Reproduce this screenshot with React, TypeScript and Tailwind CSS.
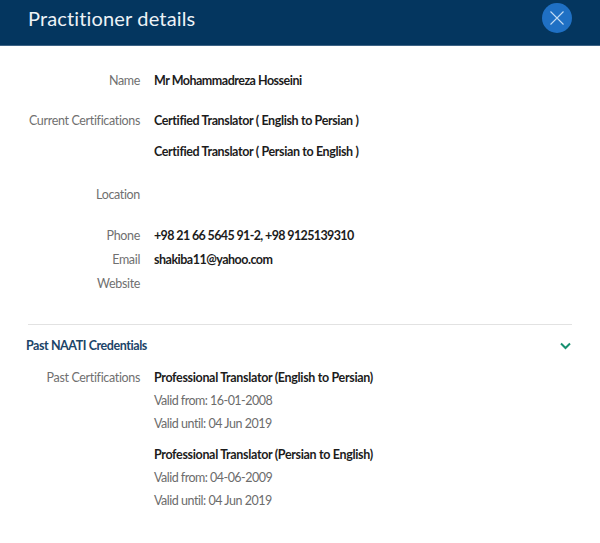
import type { ReactNode } from "react";

type RowProps = {
  label: string;
  className?: string;
  children?: ReactNode;
};

function Row({ label, className = "", children }: RowProps) {
  return (
    <div className={`flex ${className}`}>
      <dt className="w-[140px] shrink-0 text-right tracking-[-0.34px] text-[#707070]">{label}</dt>
      <dd className="ml-[14px] whitespace-nowrap font-bold text-[#1c1c1c]">{children}</dd>
    </div>
  );
}

function Credential({ title, from, until }: { title: string; from: string; until: string }) {
  return (
    <div className="mb-2">
      <p className="tracking-[-0.34px]">{title}</p>
      <p className="font-normal tracking-[-0.52px] text-[#6c6c6c]">Valid from: {from}</p>
      <p className="font-normal tracking-[-0.47px] text-[#6c6c6c]">Valid until: {until}</p>
    </div>
  );
}

export default function App() {
  return (
    <div className="h-[543px] w-[600px] overflow-hidden bg-white font-['Lato','Liberation_Sans',sans-serif] text-[12.5px] leading-6 [font-variant-ligatures:common-ligatures]">
      <header className="flex h-[46px] items-start justify-between border-b border-[#3d6385] bg-[#04365f] px-7">
        <h1 className="pt-[5px] text-[20px] leading-[26px] tracking-[0.15px] text-[#edf2f6]">Practitioner details</h1>
        <button aria-label="Close" className="mt-[3px] flex h-[30px] w-[30px] items-center justify-center rounded-full bg-[#1f70c4]">
          <svg width="14" height="14" viewBox="0 0 14 14" stroke="#c3dcf3" strokeWidth="1.1">
            <path d="M.5 .5l13 13M13.5 .5l-13 13" />
          </svg>
        </button>
      </header>

      <dl className="pt-[23px]">
        <Row label="Name">
          <span className="tracking-[-0.5px]">Mr Mohammadreza Hosseini</span>
        </Row>
        <Row label="Current Certifications" className="mt-4">
          <p className="tracking-[-0.38px]">Certified Translator ( English to Persian )</p>
          <p className="mt-[7px] tracking-[-0.38px]">Certified Translator ( Persian to English )</p>
        </Row>
        <Row label="Location" className="mt-[19px]" />
        <Row label="Phone" className="mt-[17px]">
          <span className="tracking-[-0.63px]">+98 21 66 5645 91-2, +98 9125139310</span>
        </Row>
        <Row label="Email">
          <span className="tracking-[-0.5px]">shakiba11@yahoo.com</span>
        </Row>
        <Row label="Website" />
      </dl>

      <section className="mt-7">
        <div className="mx-7 border-t border-[#e2e2e2]" />
        <div className="mt-[9px] flex items-center justify-between pl-[26px] pr-[29px]">
          <h2 className="font-bold tracking-[-0.43px] text-[#1b4468]">Past NAATI Credentials</h2>
          <svg width="11" height="8" viewBox="0 0 11 8" fill="none" stroke="#179070" strokeWidth="2">
            <path d="M1 1.5l4.5 4.5 4.5-4.5" />
          </svg>
        </div>
        <dl className="mt-2 leading-[23px]">
          <Row label="Past Certifications">
            <Credential title="Professional Translator (English to Persian)" from="16-01-2008" until="04 Jun 2019" />
            <Credential title="Professional Translator (Persian to English)" from="04-06-2009" until="04 Jun 2019" />
          </Row>
        </dl>
      </section>
    </div>
  );
}
